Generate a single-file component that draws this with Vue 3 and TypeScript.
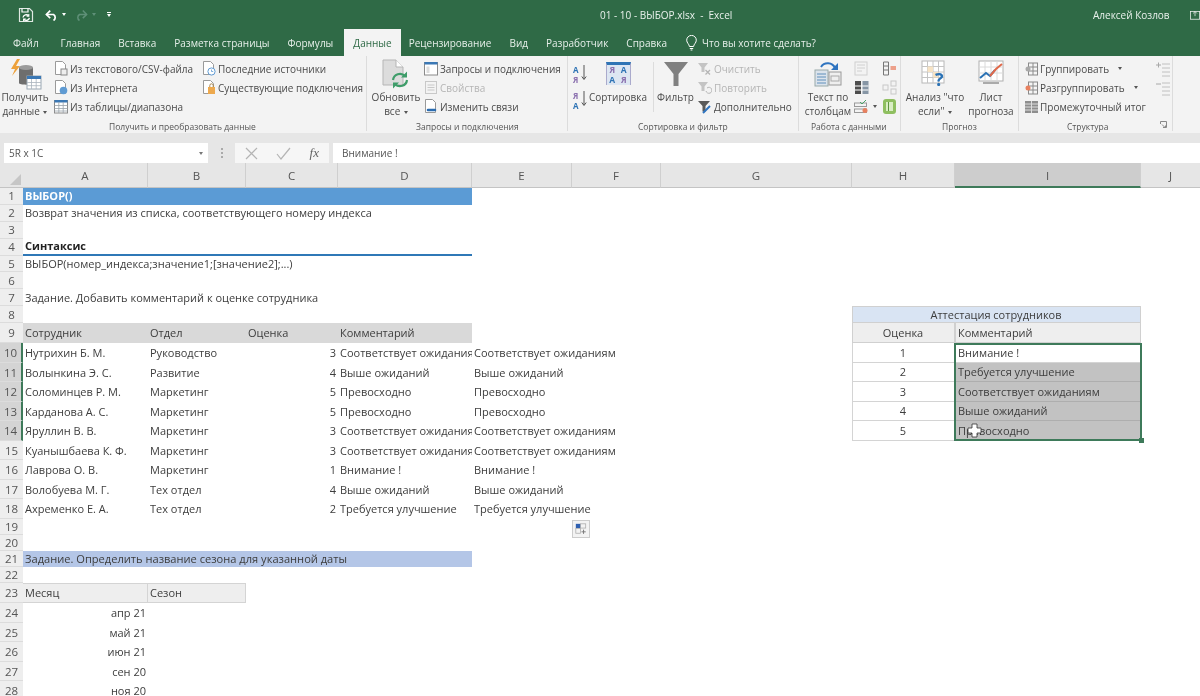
<script setup lang="ts">
interface Cell { col: number; span?: number; text?: string; cls?: string }
interface Row { n: number; cells: Cell[] }

const columns = [
  { name: 'A', cls: '' }, { name: 'B', cls: '' }, { name: 'C', cls: '' }, { name: 'D', cls: '' },
  { name: 'E', cls: '' }, { name: 'F', cls: '' }, { name: 'G', cls: '' }, { name: 'H', cls: '' },
  { name: 'I', cls: 'hd-sel' }, { name: 'J', cls: '' },
]

const tabs = ['Файл', 'Главная', 'Вставка', 'Разметка страницы', 'Формулы', 'Данные', 'Рецензирование', 'Вид', 'Разработчик', 'Справка']

const people: [string, string, string, string][] = [
  ['Нутрихин Б. М.', 'Руководство', '3', 'Соответствует ожиданиям'],
  ['Волынкина Э. С.', 'Развитие', '4', 'Выше ожиданий'],
  ['Соломинцев Р. М.', 'Маркетинг', '5', 'Превосходно'],
  ['Карданова А. С.', 'Маркетинг', '5', 'Превосходно'],
  ['Яруллин В. В.', 'Маркетинг', '3', 'Соответствует ожиданиям'],
  ['Куанышбаева К. Ф.', 'Маркетинг', '3', 'Соответствует ожиданиям'],
  ['Лаврова О. В.', 'Маркетинг', '1', 'Внимание !'],
  ['Волобуева М. Г.', 'Тех отдел', '4', 'Выше ожиданий'],
  ['Ахременко Е. А.', 'Тех отдел', '2', 'Требуется улучшение'],
]

const ratings = ['Внимание !', 'Требуется улучшение', 'Соответствует ожиданиям', 'Выше ожиданий', 'Превосходно']
const dates = ['апр 21', 'май 21', 'июн 21', 'сен 20', 'ноя 20']

const rows: Row[] = []
for (let n = 1; n <= 28; n++) rows.push({ n, cells: [] })
const at = (n: number) => rows[n - 1].cells

at(1).push({ col: 1, span: 4, text: 'ВЫБОР()', cls: 'c-title' })
at(2).push({ col: 1, text: 'Возврат значения из списка, соответствующего номеру индекса' })
at(4).push({ col: 1, span: 4, text: 'Синтаксис', cls: 'c-syntax' })
at(5).push({ col: 1, text: 'ВЫБОР(номер_индекса;значение1;[значение2];...)' })
at(7).push({ col: 1, text: 'Задание. Добавить комментарий к оценке сотрудника' })
at(8).push({ col: 8, span: 2, text: 'Аттестация сотрудников', cls: 'c-att' })
at(9).push(
  { col: 1, text: 'Сотрудник', cls: 'c-head' }, { col: 2, text: 'Отдел', cls: 'c-head' },
  { col: 3, text: 'Оценка', cls: 'c-head' }, { col: 4, text: 'Комментарий', cls: 'c-head' },
  { col: 8, text: 'Оценка', cls: 'c-rh c-mid' }, { col: 9, text: 'Комментарий', cls: 'c-rh' },
)
people.forEach((p, i) => {
  at(10 + i).push(
    { col: 1, text: p[0] }, { col: 2, text: p[1] }, { col: 3, text: p[2], cls: 'c-right' },
    { col: 4, text: p[3], cls: 'c-clip' }, { col: 5, text: p[3] },
  )
})
ratings.forEach((r, i) => {
  at(10 + i).push(
    { col: 8, text: String(i + 1), cls: 'c-rv c-mid' },
    { col: 9, text: r, cls: i === 0 ? 'c-rv' : 'c-rv c-selected' },
  )
})
at(21).push({ col: 1, span: 4, text: 'Задание. Определить название сезона для указанной даты', cls: 'c-task' })
at(23).push({ col: 1, text: 'Месяц', cls: 'c-month' }, { col: 2, text: 'Сезон', cls: 'c-month' })
dates.forEach((d, i) => at(24 + i).push({ col: 1, text: d, cls: 'c-right' }))

const rowClass = (n: number) => (n >= 10 && n <= 14 ? 'rh-sel' : '')
</script>

<template>
  <div class="app">
    <header class="titlebar">
      <div class="qat">
        <svg class="q-save" width="16" height="16" viewBox="0 0 16 16" fill="none" stroke="#fff" stroke-width="1.2"><path d="M1.5 1.5h10l3 3v10h-13z" stroke-opacity=".85" /><path d="M4 1.5v3.500h6V1.500" /><path d="M5 10.500a3.200 3.200 0 0 1 5.600-1.600M11.400 10.800a3.200 3.200 0 0 1-5.600 1.400" stroke-width="1.400" /><path d="M10.800 7v2.200H8.600M5.600 14.200V12h2.200" stroke-width="1.100" /></svg>
        <svg class="q-undo" width="14" height="12" viewBox="0 0 14 12" fill="none" stroke="#fff" stroke-width="1.7"><path d="M1.500 5.500h7a3.500 3.500 0 0 1 0 6" /><path d="M5.200 1.600 1.400 5.500l3.800 3.600" /></svg>
        <i class="q-tri"></i>
        <svg class="q-redo" width="14" height="12" viewBox="0 0 14 12" fill="none" stroke="#5f9078" stroke-width="1.500"><path d="M12.500 5.500h-7a3.500 3.500 0 0 0 0 6" /><path d="M8.800 1.600l3.800 3.900-3.800 3.600" /></svg>
        <i class="q-tri dim"></i>
        <span class="q-custom"><b></b><i class="q-tri"></i></span>
      </div>
      <div class="doc">01 - 10 - ВЫБОР.xlsx &nbsp;-&nbsp; Excel</div>
      <div class="user">Алексей Козлов</div>
      <svg class="user-ico" width="10" height="12" viewBox="0 0 13 12" fill="none" stroke="#fff"><rect x=".5" y="1.500" width="12" height="10" /><path d="M6.500 1.500v6M4 4l2.500-2.500L9 4" /></svg>
    </header>

    <nav class="tabs">
      <span v-for="t in tabs" :key="t" class="tab" :class="{ active: t === 'Данные' }">{{ t }}</span>
      <span class="tell">
        <svg width="11" height="16" viewBox="0 0 11 16" fill="none" stroke="#fff" stroke-width="1"><path d="M3.400 11.500C3.200 9 .7 8 .7 5.200a4.800 4.800 0 0 1 9.600 0c0 2.800-2.500 3.800-2.700 6.300z" /><path d="M3.800 13.500h3.400M4.600 15h1.800" /></svg>
        Что вы хотите сделать?
      </span>
    </nav>

    <section class="ribbon">
      <!-- Получить и преобразовать данные -->
      <div class="rgroup g1">
        <div class="rbody">
          <div class="big b-get">
            <svg class="big-ico" width="34" height="31" viewBox="0 0 34 31"><path d="M9 0 3 10h4l-3 7 8-10H8l4-7z" fill="#eda13b" /><path d="M11 9c0-2.200 14-2.200 14 0v15c0 2.200-14 2.200-14 0z" fill="#6e6e6e" /><ellipse cx="18" cy="8.500" rx="7" ry="2.600" fill="#9b9b9b" /><rect x="19" y="17" width="14" height="13" fill="#fff" stroke="#9aa7b3" /><rect x="19" y="17" width="14" height="3" fill="#3b78b5" /><path d="M19 23.500h14M19 26.700h14M23.500 20v10M28.200 20v10" stroke="#aab4be" stroke-width=".8" /></svg>
            <span>Получить</span><span>данные <i class="tri"></i></span>
          </div>
          <div class="col c1">
            <div class="item"><svg width="14" height="15" viewBox="0 0 14 15" fill="none"><path d="M1.500 .5h7l3 3v10h-10z" fill="#fff" stroke="#9a9a9a" /><rect x="7" y="8" width="6" height="6" fill="#eee" stroke="#888" /></svg>Из текстового/CSV-файла</div>
            <div class="item"><svg width="14" height="15" viewBox="0 0 14 15" fill="none"><path d="M1.500 .5h7l3 3v10h-10z" fill="#fff" stroke="#9a9a9a" /><circle cx="9.500" cy="10.500" r="3.800" fill="#5f9bd3" /></svg>Из Интернета</div>
            <div class="item"><svg width="14" height="15" viewBox="0 0 14 15" fill="none"><rect x=".5" y="1.500" width="13" height="12.500" fill="#fff" stroke="#8a8a8a" /><rect x=".5" y="1" width="13" height="2.500" fill="#3b78b5" /><path d="M.5 6.500h13M.5 9.500h13M.5 12h13M4.800 3v11M9.200 3v11" stroke="#9aa3ab" stroke-width=".8" /></svg>Из таблицы/диапазона</div>
          </div>
          <div class="col c2">
            <div class="item"><svg width="14" height="15" viewBox="0 0 14 15" fill="none"><path d="M1.500 .5h7l3 3v10h-10z" fill="#fff" stroke="#9a9a9a" /><circle cx="9.500" cy="10.500" r="3.600" fill="#fff" stroke="#5f9bd3" /><path d="M9.500 8.500v2h1.700" stroke="#5f9bd3" stroke-width=".8" /></svg>Последние источники</div>
            <div class="item"><svg width="14" height="15" viewBox="0 0 14 15" fill="none"><path d="M1.500 .5h7l3 3v10h-10z" fill="#fff" stroke="#9a9a9a" /><rect x="6" y="7" width="7" height="7" fill="#eda94e" /><path d="M7.800 7V5.500a1.700 1.700 0 0 1 3.400 0V7" stroke="#a98850" /></svg>Существующие подключения</div>
          </div>
        </div>
        <div class="rlabel l1">Получить и преобразовать данные</div>
      </div>

      <!-- Запросы и подключения -->
      <div class="rgroup g2">
        <div class="rbody">
          <div class="big b-refresh">
            <svg class="big-ico" width="28" height="31" viewBox="0 0 28 31" fill="none"><path d="M1 1h13l7 7v18H1z" fill="#dcdcdc" stroke="#b5b5b5" /><path d="M14 1v7h7" fill="#fff" stroke="#b5b5b5" /><path d="M11 21a7 7 0 0 1 12-4" stroke="#3f9d6a" stroke-width="2.200" /><path d="M25 21a7 7 0 0 1-12 4" stroke="#3f9d6a" stroke-width="2.200" /><path d="M25 12.500v6h-6zM11 29.500v-6h6z" fill="#3f9d6a" /></svg>
            <span>Обновить</span><span>все <i class="tri"></i></span>
          </div>
          <div class="col c3">
            <div class="item"><svg width="14" height="15" viewBox="0 0 14 15" fill="none"><rect x=".5" y="1.500" width="13" height="12.500" fill="#fff" stroke="#8a8a8a" /><rect x=".5" y="1" width="13" height="2.500" fill="#3b78b5" /><rect x="2.500" y="5.500" width="3" height="6.500" fill="#ddd" /></svg>Запросы и подключения</div>
            <div class="item off"><svg width="14" height="15" viewBox="0 0 14 15" fill="none" stroke="#c8c8c8"><rect x="1.500" y="1.500" width="11" height="12" /><path d="M3.500 5h7M3.500 7.500h7M3.500 10h7" /></svg>Свойства</div>
            <div class="item"><svg width="14" height="15" viewBox="0 0 14 15" fill="none"><path d="M1.500 .5h7l3 3v10h-10z" fill="#fff" stroke="#9a9a9a" /><path d="M4 11h3M8 11h3" stroke="#2b6cb0" stroke-width="2.600" stroke-linecap="round" /></svg>Изменить связи</div>
          </div>
        </div>
        <div class="rlabel l2">Запросы и подключения</div>
      </div>

      <!-- Сортировка и фильтр -->
      <div class="rgroup g3">
        <div class="rbody">
          <div class="sort-az">
            <span class="az"><em class="blue">А</em><em class="pur">Я</em><svg width="6" height="16" viewBox="0 0 6 16" fill="none" stroke="#555"><path d="M3 0v14M.8 11.500 3 14.500l2.200-3" /></svg></span>
            <span class="az"><em class="pur">Я</em><em class="blue">А</em><svg width="6" height="16" viewBox="0 0 6 16" fill="none" stroke="#555"><path d="M3 0v14M.8 11.500 3 14.500l2.200-3" /></svg></span>
          </div>
          <div class="big b-sort">
            <span class="sort-ico"><em class="pur">Я</em><em class="blue">А</em><em class="blue">А</em><em class="pur">Я</em></span>
            <span>Сортировка</span>
          </div>
          <div class="vsep"></div>
          <div class="big b-filter">
            <svg class="big-ico" width="26" height="31" viewBox="0 0 26 31"><path d="M1 3h24L15.500 15v12h-5V15z" fill="#808080" /></svg>
            <span>Фильтр</span>
          </div>
          <div class="col c4">
            <div class="item off"><svg width="15" height="15" viewBox="0 0 15 15" fill="none"><path d="M1 2h10L7.500 6.500V11h-3V6.500z" fill="#c4c4c4" /><path d="M8.500 9l4.500 4.500M13 9l-4.500 4.500" stroke="#b5b5b5" stroke-width="1.300" /></svg>Очистить</div>
            <div class="item off"><svg width="15" height="15" viewBox="0 0 15 15" fill="none"><path d="M1 2h10L7.500 6.500V11h-3V6.500z" fill="#c4c4c4" /><path d="M9 11a3 3 0 1 0 1-3" stroke="#b5b5b5" /></svg>Повторить</div>
            <div class="item"><svg width="15" height="15" viewBox="0 0 15 15" fill="none"><path d="M1 2h12L8.500 7v5.500h-3V7z" fill="#5a5a5a" /><path d="M6 14 13 7" stroke="#2f74c0" stroke-width="2" /></svg>Дополнительно</div>
          </div>
        </div>
        <div class="rlabel l3">Сортировка и фильтр</div>
      </div>

      <!-- Работа с данными -->
      <div class="rgroup g4">
        <div class="rbody">
          <div class="big b-text">
            <svg class="big-ico" width="28" height="31" viewBox="0 0 28 31" fill="none"><rect x="1" y="11" width="13" height="16" fill="#dbe3ec" stroke="#9aa" /><path d="M3 15h9M3 18h9M3 21h9M3 24h9" stroke="#5f8fbb" /><rect x="15" y="13" width="12" height="13" fill="#efefef" stroke="#999" /><rect x="17" y="17" width="8" height="5" stroke="#aaa" /><path d="M7 8a8 8 0 0 1 14 1" stroke="#2f74c0" stroke-width="2" /><path d="M24 4v7h-7z" fill="#2f74c0" /></svg>
            <span>Текст по</span><span>столбцам</span>
          </div>
          <div class="tools">
            <svg width="15" height="15" viewBox="0 0 15 15" fill="none" stroke="#d0d0d0"><rect x="1" y="1" width="12" height="13" /><path d="M3 4h8M3 7h8M3 10h5" /></svg>
            <svg width="15" height="15" viewBox="0 0 15 15" fill="none"><path d="M1.500 1h5v13h-5z" stroke="#777" /><path d="M1.500 5h5M1.500 9h5" stroke="#777" /><rect x="8.500" y="5" width="5.500" height="4" fill="#eda08a" /></svg>
            <svg width="15" height="15" viewBox="0 0 15 15"><rect x="1" y="1" width="6" height="13" fill="#4d4d4d" /><rect x="8.500" y="1" width="6" height="13" fill="#8796a5" /><path d="M1 6h13.500M1 10h13.500" stroke="#fff" /></svg>
            <svg width="15" height="15" viewBox="0 0 15 15" fill="none" stroke="#c8c8c8"><rect x="1" y="5" width="5" height="5" /><rect x="9" y="1" width="5" height="5" /><rect x="9" y="9" width="5" height="5" /></svg>
            <span class="tool-wrap"><svg width="15" height="15" viewBox="0 0 15 15" fill="none"><rect x=".5" y="4" width="12" height="3.500" stroke="#999" /><rect x=".5" y="10" width="12" height="3.500" stroke="#999" /><path d="M6 3l2 2 4-4" stroke="#4aa36a" /><circle cx="11" cy="11.500" r="2.500" fill="#e8805f" /></svg><i class="tri"></i></span>
            <svg width="15" height="17" viewBox="0 0 15 17"><rect x="1" y="1" width="13" height="15" rx="3" fill="#8fbf60" /><rect x="4" y="4" width="7" height="9" fill="#d9edc4" /><path d="M6.500 4v9" stroke="#5f9440" /></svg>
          </div>
        </div>
        <div class="rlabel l4">Работа с данными</div>
      </div>

      <!-- Прогноз -->
      <div class="rgroup g5">
        <div class="rbody">
          <div class="big b-what">
            <svg class="big-ico" width="28" height="31" viewBox="0 0 28 31" fill="none"><rect x="1" y="2" width="22" height="22" fill="#fff" stroke="#b8b8b8" /><path d="M1 7.500h22M1 13h22M1 18.500h22M6.500 2v22M12 2v22M17.500 2v22" stroke="#c4c4c4" /><rect x="6.500" y="7.500" width="5.500" height="5.500" fill="#f7e3c4" /><rect x="12" y="13" width="5.500" height="5.500" fill="#f7e3c4" /><text x="14" y="27" font-size="18" font-weight="700" font-family="Open Sans, sans-serif" fill="#2a72b5">?</text></svg>
            <span>Анализ "что</span><span>если" <i class="tri"></i></span>
          </div>
          <div class="big b-fore">
            <svg class="big-ico" width="28" height="31" viewBox="0 0 28 31" fill="none"><rect x="2" y="2" width="24" height="20" fill="#fff" stroke="#b0b0b0" /><path d="M2 8h24M2 14h24M8 2v20M14 2v20M20 2v20" stroke="#dadada" /><path d="M3 19l6-5 4 3 5-6" stroke="#2a72b5" stroke-width="2" /><path d="M13 17l6-7 6-5" stroke="#e0694a" stroke-width="2" /><path d="M6 24h16" stroke="#aaa" stroke-width="2" /></svg>
            <span>Лист</span><span>прогноза</span>
          </div>
        </div>
        <div class="rlabel l5">Прогноз</div>
      </div>

      <!-- Структура -->
      <div class="rgroup g6">
        <div class="rbody">
          <div class="col c6">
            <div class="item"><svg width="13" height="14" viewBox="0 0 13 14" fill="none" stroke="#8a8a8a"><rect x="3.500" y="1" width="9" height="12" fill="#f5f5f5" /><path d="M3.500 5h9M3.500 9h9M8 1v12" /><circle cx="3" cy="7" r="2.500" fill="#aaa" stroke="none" /></svg>Группировать<i class="tri wide"></i></div>
            <div class="item"><svg width="13" height="14" viewBox="0 0 13 14" fill="none" stroke="#8a8a8a"><rect x="3.500" y="1" width="9" height="12" fill="#f5f5f5" /><path d="M3.500 5h9M3.500 9h9M8 1v12" /><circle cx="3" cy="7" r="2.500" fill="#e8805f" stroke="none" /></svg>Разгруппировать<i class="tri wide"></i></div>
            <div class="item"><svg width="13" height="14" viewBox="0 0 13 14"><rect x="0" y="1" width="13" height="12" fill="#8e8e8e" /><path d="M0 4h13M0 7h13M0 10h13M6.500 1v12" stroke="#ddd" /></svg>Промежуточный итог</div>
          </div>
          <div class="outline">
            <svg width="14" height="15" viewBox="0 0 14 15" fill="none" stroke="#c0c0c0"><path d="M6 2h8M6 6h8M6 10h8M6 14h8" /><path d="M0 3h5M2.500 .5v5" stroke="#a8a8a8" /></svg>
            <svg width="14" height="15" viewBox="0 0 14 15" fill="none" stroke="#c0c0c0"><path d="M6 2h8M6 6h8M6 10h8M6 14h8" /><path d="M0 3h5" stroke="#a8a8a8" /></svg>
          </div>
        </div>
        <div class="rlabel l6">Структура
          <svg class="launcher" width="7" height="7" viewBox="0 0 7 7" fill="none" stroke="#888"><path d="M.5 3V.5h6v6H3M2 3.500l3 3M3.500 6.500h2v-2" /></svg>
        </div>
      </div>
    </section>

    <div class="formula-bar">
      <div class="namebox"><span>5R x 1C</span><i class="tri dark"></i></div>
      <span class="grip"></span>
      <div class="fx-btns">
        <svg width="13" height="13" viewBox="0 0 13 13" fill="none" stroke="#b4b4b4" stroke-width="1.200"><path d="M1 1l11 11M12 1 1 12" /></svg>
        <svg width="15" height="13" viewBox="0 0 15 13" fill="none" stroke="#b4b4b4" stroke-width="1.200"><path d="M1 7l4 5L14 1" /></svg>
        <span class="fx">fx</span>
      </div>
      <div class="formula">Внимание !</div>
    </div>

    <div class="sheet-wrap">
      <div class="sheet">
        <div class="corner"><i></i></div>
        <div v-for="c in columns" :key="c.name" class="colhd" :class="c.cls">{{ c.name }}</div>
        <template v-for="r in rows" :key="r.n">
          <div class="rowhd" :class="rowClass(r.n)" :style="{ gridRow: r.n + 1 }">{{ r.n }}</div>
          <div
            v-for="c in r.cells"
            :key="c.col"
            class="cell"
            :class="c.cls"
            :style="{ gridRow: r.n + 1, gridColumn: `${c.col + 1} / span ${c.span ?? 1}` }"
          >{{ c.text }}</div>
        </template>
      </div>
      <div class="selection"><b></b></div>
      <svg class="cursor" width="15" height="15" viewBox="0 0 15 15"><path d="M5 1h5v4h4v5h-4v4H5v-4H1V5h4z" fill="#fff" stroke="#333" stroke-width=".8" /></svg>
      <div class="paste">
        <svg width="16" height="16" viewBox="0 0 17 17" fill="none"><rect x="3" y="3" width="5" height="4.500" fill="#2f5fb0" /><rect x="8" y="3" width="5.500" height="4.500" stroke="#aaa" stroke-width=".8" /><rect x="3" y="8" width="5" height="5" stroke="#aaa" stroke-width=".8" /><path d="M9 11.500h4.500M11.200 9.200v4.500" stroke="#777" /></svg>
      </div>
    </div>
  </div>
</template>

<style>
html, body { margin: 0; background: #fff; overflow: hidden; }
</style>

<style scoped>
.app {
  width: 1200px;
  height: 696px;
  overflow: hidden;
  display: flex;
  flex-direction: column;
  font-family: "Open Sans", "Noto Sans", sans-serif;
  color: #444;
  background: #fff;
  filter: blur(0.4px);
}

/* title bar */
.titlebar {
  height: 29px;
  background: #2f6a46;
  color: #e9f1ec;
  display: flex;
  align-items: center;
  font-size: 10px;
  flex: none;
}
.titlebar > * { flex: none; }
.qat { width: 600px; display: flex; align-items: center; padding-left: 18px; box-sizing: border-box; }
.q-undo { margin-left: 11px; }
.q-tri, .tri {
  display: inline-block;
  width: 0;
  height: 0;
  border-left: 2.500px solid transparent;
  border-right: 2.500px solid transparent;
  border-top: 3px solid #fff;
  vertical-align: middle;
}
.q-tri { margin-left: 3px; }
.q-tri.dim { border-top-color: #5f9078; margin-left: 4px; }
.q-redo { margin-left: 8px; }
.q-custom { margin-left: 11px; display: inline-flex; flex-direction: column; align-items: center; gap: 1px; }
.q-custom b { width: 4px; height: 1px; background: #fff; }
.q-custom .q-tri { margin-left: 0; }
.doc { width: 493px; }
.user { width: 97px; }
.user-ico { opacity: .9; }

/* tabs */
.tabs {
  height: 27px;
  background: #2f6a46;
  display: flex;
  align-items: flex-end;
  color: #e6efe9;
  font-size: 10px;
  padding-left: 4px;
  flex: none;
}
.tab {
  height: 27px;
  line-height: 28px;
  padding: 0 9px;
  white-space: nowrap;
}
.tab:first-child { margin-right: 4px; }
.tab.active { background: #f3f3f3; color: #2f6a46; margin: 0 -1px 0 2px; }
.tell { display: inline-flex; align-items: center; gap: 5px; height: 27px; margin-left: 10px; white-space: nowrap; }

/* ribbon */
.ribbon {
  height: 77px;
  background: #f3f3f3;
  display: flex;
  flex: none;
  font-size: 10px;
  line-height: 14px;
  color: #4a4a4a;
}
.rgroup { display: flex; flex-direction: column; border-right: 1px solid #dcdcdc; box-sizing: border-box; height: 75px; position: relative; }
.rbody { flex: none; height: 61px; padding-top: 3px; display: flex; box-sizing: content-box; }
.rlabel { font-size: 8.500px; line-height: 14px; text-align: center; color: #555; white-space: nowrap; }
.g1 { width: 367px; }
.g2 { width: 201px; }
.g3 { width: 231px; }
.g4 { width: 102px; }
.g5 { width: 118px; }
.g6 { width: 154px; }

.big { display: flex; flex-direction: column; align-items: center; white-space: nowrap; flex: none; }
.big-ico { height: 31px; flex: none; }
.col { display: flex; flex-direction: column; flex: none; }
.item { height: 19px; display: flex; align-items: center; gap: 2px; white-space: nowrap; }
.item svg { flex: none; }
.item.off { color: #b5b5b5; }
.tri { border-top-color: #555; margin-left: 1px; }
.tri.wide { margin-left: 7px; }

.b-get { width: 46px; margin-left: 2px; }
.c1 { width: 148px; margin-left: 6px; }
.c2 { width: 150px; }
.l1 { padding-left: 0; text-align: left; margin-left: 109px; }

.b-refresh { width: 50px; margin-left: 4px; }
.c3 { margin-left: 3px; }
.l2 { text-align: left; margin-left: 49px; }

.sort-az { width: 15px; margin-left: 5px; display: flex; flex-direction: column; gap: 6px; margin-top: 6px; flex: none; }
.az { display: grid; grid-template-columns: 8px 6px; grid-template-rows: 10px 10px; font-size: 8px; line-height: 10px; font-weight: 700; }
.az em { font-style: normal; grid-column: 1; height: 10px; overflow: hidden; }
.az svg { grid-column: 2; grid-row: 1 / span 2; }
.blue { color: #2f74b5; }
.pur { color: #8a6fae; }
.b-sort { width: 60px; }
.sort-ico {
  width: 25px;
  height: 23px;
  margin: 3px 0 5px;
  display: grid;
  grid-template-columns: 1fr 1fr;
  border: 1px solid #aac;
  border-top: 3px solid #2f74b5;
  background: #fff;
  font-size: 8.500px;
  line-height: 10px;
  font-weight: 700;
  text-align: center;
  box-sizing: border-box;
}
.sort-ico em { font-style: normal; background: #dde6f2; }
.vsep { width: 1px; height: 50px; background: #dcdcdc; margin: 3px 3px 0 5px; flex: none; }
.b-filter { width: 37px; }
.c4 { margin-left: 3px; }
.l3 { text-align: left; margin-left: 70px; }

.b-text { width: 50px; margin-left: 4px; }
.tools { display: grid; grid-template-columns: 28px 15px; grid-auto-rows: 19px; margin-left: 1px; padding-top: 0; align-items: center; }
.tool-wrap { display: flex; align-items: center; gap: 3px; }
.l4 { text-align: left; margin-left: 12px; }

.b-what { width: 66px; margin-left: 1px; }
.b-fore { width: 46px; margin-left: 0; }
.l5 { text-align: left; margin-left: 41px; }

.c6 { width: 130px; margin-left: 6px; }
.outline { display: flex; flex-direction: column; gap: 4px; margin-top: 3px; margin-left: 1px; }
.l6 { text-align: left; margin-left: 48px; }
.launcher { position: absolute; right: 5px; bottom: 3px; }

/* formula bar */
.formula-bar {
  height: 30px;
  background: #e6e6e6;
  display: flex;
  align-items: flex-end;
  padding: 0 0 0 4px;
  flex: none;
  box-sizing: border-box;
  font-size: 10px;
}
.namebox {
  width: 204px;
  height: 20px;
  background: #fff;
  display: flex;
  align-items: center;
  justify-content: space-between;
  padding: 0 5px;
  box-sizing: border-box;
  color: #555;
}
.tri.dark { border-top-color: #777; }
.grip { width: 2px; height: 10px; margin: 0 12px 5px 13px; border-left: 2px dotted #aaa; box-sizing: border-box; }
.fx-btns {
  width: 94px;
  height: 20px;
  background: #f6f6f6;
  display: flex;
  align-items: center;
  justify-content: space-between;
  padding: 0 10px 0 10px;
  box-sizing: border-box;
}
.fx { font-family: "Liberation Serif", serif; font-style: italic; font-size: 13px; color: #666; }
.formula {
  flex: 1;
  height: 20px;
  line-height: 20px;
  background: #fff;
  margin-left: 4px;
  padding-left: 9px;
  color: #555;
}

/* sheet */
.sheet-wrap { position: relative; flex: 1; min-height: 0; overflow: hidden; }
.sheet {
  display: grid;
  grid-template-columns: 23px 125px 98px 92px 134px 100px 89px 191px 103px 186px 59px;
  grid-template-rows:
    25px repeat(8, 16.900px) 20.300px repeat(9, 19.500px) repeat(4, 16px) 20.500px repeat(5, 19.500px);
  font-family: "Open Sans", sans-serif;
  font-size: 11px;
  color: #3d3d3d;
}
.corner { background: #e6e6e6; border-bottom: 1px solid #c4c4c4; box-sizing: border-box; position: relative; grid-row: 1; grid-column: 1; }
.corner i { position: absolute; right: 2px; bottom: 2px; width: 0; height: 0; border-style: solid; border-width: 0 0 11px 11px; border-color: transparent transparent #c6c6c6 transparent; }
.colhd {
  grid-row: 1;
  background: #e6e6e6;
  border-right: 1px solid #cfcfcf;
  border-bottom: 1px solid #c4c4c4;
  box-sizing: border-box;
  text-align: center;
  font-size: 11.500px;
  line-height: 26px;
  color: #555;
}
.colhd:nth-child(11) { border-right: 0; }
.hd-sel { background: #cdcdcd; border-bottom: 2px solid #3e7a5a; }
.rowhd {
  grid-column: 1;
  background: #eeeeee;
  border-bottom: 1px solid #dcdcdc;
  box-sizing: border-box;
  text-align: center;
  font-size: 11.500px;
  color: #555;
  display: flex;
  align-items: center;
  justify-content: center;
}
.rh-sel { background: #d4d4d4; border-right: 2px solid #3e7a5a; }
.cell {
  display: flex;
  align-items: center;
  padding: 0 3px 1px 2px;
  white-space: nowrap;
  min-width: 0;
  box-sizing: border-box;
}
.c-title { background: #5b9bd5; color: #fff; font-weight: 700; }
.c-syntax { font-weight: 700; color: #222; border-bottom: 2px solid #2f78b7; }
.c-head { background: #d9d9d9; margin-top: 0; }
.c-right { justify-content: flex-end; padding-right: 2px; }
.c-clip { overflow: hidden; }
.c-task { background: #b4c6e7; font-size: 11.100px; }
.c-month { background: #eeeeee; border: 1px solid #d4d4d4; border-width: 1px 1px 1px 0; }
.c-att { background: #d9e4f3; justify-content: center; border: 1px solid #d0d0d0; }
.c-rh { background: #eeeeee; border: 1px solid #d0d0d0; border-top: 0; border-left: 1px solid #d0d0d0; }
.c-rv { border: 1px solid #d4d4d4; border-top: 0; }
.c-mid { justify-content: center; }
.c-selected { background: #c2c2c2; border-color: #aeaeae; }
.selection {
  position: absolute;
  left: 954px;
  top: 180px;
  width: 188px;
  height: 98px;
  border: 2px solid #3e7a5a;
  box-sizing: border-box;
}
.selection b { position: absolute; right: -4px; bottom: -4px; width: 5px; height: 5px; background: #3e7a5a; }
.cursor { position: absolute; left: 967px; top: 260px; }
.paste {
  position: absolute;
  left: 572px;
  top: 357px;
  width: 18px;
  height: 18px;
  background: #f3f3f3;
  border: 1px solid #ccc;
  box-sizing: border-box;
}
.paste svg { display: block; margin: 0; }
</style>
